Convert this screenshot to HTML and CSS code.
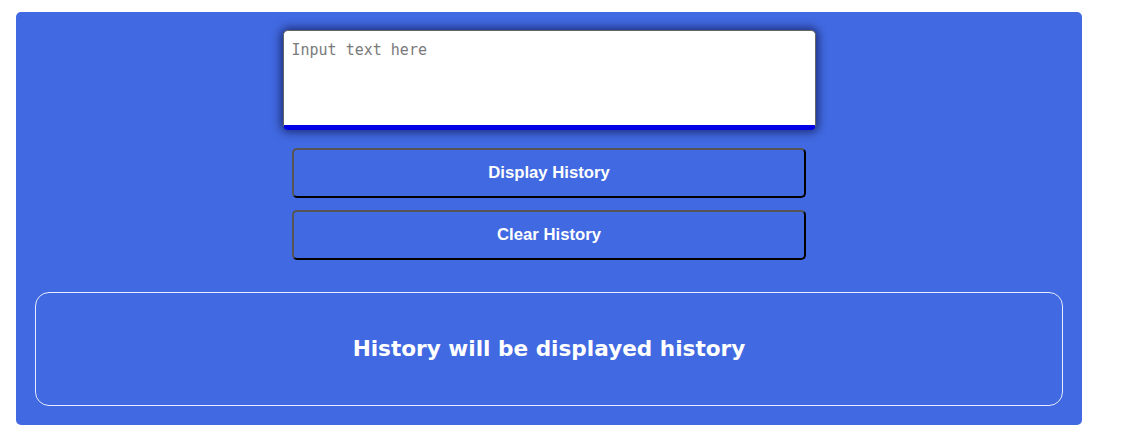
FILE: index.html
```html
<!DOCTYPE html>
<html>
<head>
<meta charset="utf-8">
<link rel="stylesheet" href="styles.css">
</head>
<body>
<div class="app">
  <textarea class="input" placeholder="Input text here"></textarea>
  <button class="btn btn-first">Display History</button>
  <button class="btn">Clear History</button>
  <div class="history">History will be displayed history</div>
</div>
</body>
</html>
```

FILE: styles.css
```css
html, body {
  margin: 0;
  padding: 0;
  background: #ffffff;
}
body {
  padding: 12px 0 0 16px;
}
.app {
  box-sizing: border-box;
  width: 1066px;
  height: 413px;
  background: #4169e1;
  border-radius: 5px;
  padding: 18px 19px 19px 19px;
  display: flex;
  flex-direction: column;
  align-items: center;
}
.input {
  box-sizing: border-box;
  width: 533px;
  height: 100px;
  margin: 0;
  padding: 9px 8px;
  border: 1px solid #666;
  border-bottom: 5px solid #0000e6;
  border-radius: 5px;
  resize: none;
  font-family: "DejaVu Sans Mono", monospace;
  font-size: 15px;
  line-height: 20px;
  background: #fff;
  box-shadow: 0 0 10px 2px rgba(0,0,40,0.6);
  outline: none;
}
.input::placeholder {
  color: #7a7a7a;
}
.btn {
  box-sizing: border-box;
  width: 514px;
  height: 50px;
  margin-top: 12px;
  background: #4169e1;
  color: #fff;
  font-family: "Liberation Sans", Arial, sans-serif;
  font-weight: bold;
  font-size: 16.7px;
  border: 2px solid;
  border-color: #555 #000 #000 #555;
  border-radius: 5px;
  padding: 0;
}
.btn-first {
  margin-top: 18px;
}
.history {
  box-sizing: border-box;
  align-self: stretch;
  margin-top: 32px;
  height: 114px;
  border: 1px solid #e8ecff;
  border-radius: 14px;
  display: flex;
  align-items: center;
  justify-content: center;
  color: #fff;
  font-family: "DejaVu Sans", sans-serif;
  font-weight: bold;
  font-size: 21.6px;
  padding-bottom: 1px;
}
```
